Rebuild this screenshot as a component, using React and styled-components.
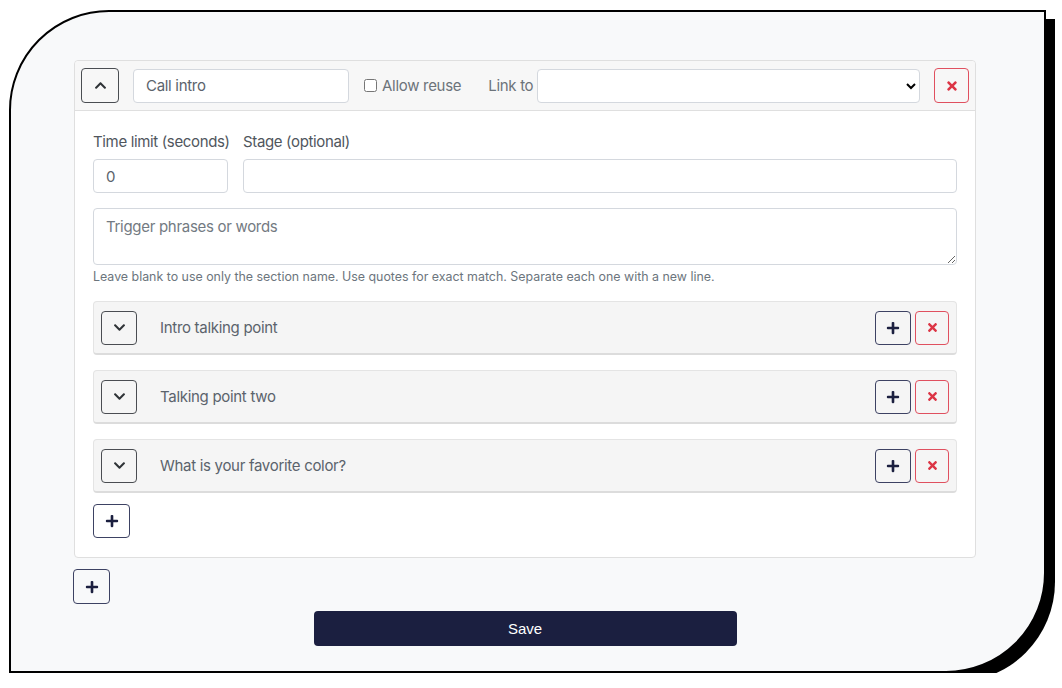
import React from 'react';
import styled, { createGlobalStyle } from 'styled-components';
import { FaChevronUp, FaChevronDown, FaPlus, FaTimes } from 'react-icons/fa';

const GlobalStyle = createGlobalStyle`
    body {
        margin: 0;
        background: #fff;
        font-family: Inter, 'Noto Sans', sans-serif;
    }
    * {
        box-sizing: border-box;
    }
`;

const points = ['Intro talking point', 'Talking point two', 'What is your favorite color?'];

export default function App() {
    return (
        <>
            <GlobalStyle />
            <Frame>
                <Column>
                    <Card>
                        <CardHeader>
                            <IconButton $variant="dark" $w={38}>
                                <FaChevronUp size={13} />
                            </IconButton>
                            <TextInput $w={216} defaultValue="Call intro" />
                            <CheckLabel>
                                <input type="checkbox" />
                                Allow reuse
                            </CheckLabel>
                            <LinkLabel>Link to</LinkLabel>
                            <Select>
                                <option></option>
                            </Select>
                            <IconButton $variant="danger" $w={35}>
                                <FaTimes size={14} />
                            </IconButton>
                        </CardHeader>
                        <CardBody>
                            <FieldRow>
                                <Field $w={135}>
                                    <Label>Time limit (seconds)</Label>
                                    <TextInput defaultValue="0" />
                                </Field>
                                <Field $grow>
                                    <Label>Stage (optional)</Label>
                                    <TextInput />
                                </Field>
                            </FieldRow>
                            <TextArea placeholder="Trigger phrases or words" />
                            <Help>
                                Leave blank to use only the section name. Use quotes for exact match. Separate each one with a new line.
                            </Help>
                            <PointList>
                                {points.map(p => (
                                    <PointRow key={p}>
                                        <IconButton $variant="dark" $w={36} $h={34}>
                                            <FaChevronDown size={13} />
                                        </IconButton>
                                        <PointTitle>{p}</PointTitle>
                                        <RowActions>
                                            <IconButton $variant="navy" $w={36} $h={34}>
                                                <FaPlus size={14} />
                                            </IconButton>
                                            <IconButton $variant="danger" $w={34} $h={34}>
                                                <FaTimes size={13} />
                                            </IconButton>
                                        </RowActions>
                                    </PointRow>
                                ))}
                            </PointList>
                            <IconButton $variant="navy" $w={37} $h={34}>
                                <FaPlus size={14} />
                            </IconButton>
                        </CardBody>
                    </Card>
                    <IconButton $variant="navy" $w={37} $h={35}>
                        <FaPlus size={14} />
                    </IconButton>
                    <SaveButton>Save</SaveButton>
                </Column>
            </Frame>
        </>
    );
}

const Frame = styled.div`
    margin: 10px 0 0 9px;
    width: 1037px;
    height: 663px;
    border: 2px solid #000;
    border-radius: 100px 0 100px 0;
    background: #f8f9fa;
    box-shadow: 9px 9px 0 #000;
    padding: 48px 0 0 62px;
`;

const Column = styled.div`
    width: 904px;
    display: flex;
    flex-direction: column;
    align-items: flex-start;
`;

const Card = styled.div`
    width: 902px;
    margin: 0 1px 11px;
    background: #fff;
    border: 1px solid #dfdfdf;
    border-radius: 4px;
`;

const CardHeader = styled.div`
    height: 50px;
    display: flex;
    align-items: center;
    padding: 0 6px;
    background: #f7f7f7;
    border-bottom: 1px solid #dfdfdf;
    border-radius: 4px 4px 0 0;
    white-space: nowrap;

    & > * {
        flex: none;
    }

    & > * + * {
        margin-left: 14px;
    }
`;

const IconButton = styled.button`
    width: ${p => p.$w}px;
    height: ${p => p.$h || 35}px;
    flex: none;
    display: flex;
    align-items: center;
    justify-content: center;
    padding: 0;
    background: transparent;
    border-radius: 4px;
    cursor: pointer;
    border: 1px solid
        ${p => (p.$variant === 'danger' ? '#e0505f' : p.$variant === 'navy' ? '#3d4263' : '#4a4d52')};
    color: ${p => (p.$variant === 'danger' ? '#dc3545' : p.$variant === 'navy' ? '#1b1f3f' : '#2f3337')};
`;

const TextInput = styled.input`
    width: ${p => (p.$w ? `${p.$w}px` : '100%')};
    height: 34px;
    flex: none;
    border: 1px solid #d4d8de;
    border-radius: 4px;
    background: #fff;
    padding: 0 12px;
    font-family: Inter, sans-serif;
    font-size: 15px;
    letter-spacing: -0.3px;
    color: #5b636c;
    outline: none;
`;

const CheckLabel = styled.label`
    display: flex;
    align-items: center;
    gap: 5px;
    font-size: 15px;
    letter-spacing: -0.3px;
    color: #6c737a;

    input {
        margin: 0;
        width: 13px;
        height: 13px;
    }

    && {
        margin-left: 15px;
    }
`;

const LinkLabel = styled.span`
    font-size: 15px;
    letter-spacing: -0.3px;
    color: #6c737a;

    && {
        margin-left: 27px;
    }
`;

const Select = styled.select`
    width: 383px;
    height: 34px;
    border: 1px solid #d4d8de;
    border-radius: 4px;
    background: #fff;
    font-family: Inter, sans-serif;

    && {
        margin-left: 4px;
    }
`;

const CardBody = styled.div`
    padding: 19px 18px 19px;
`;

const FieldRow = styled.div`
    display: flex;
    gap: 15px;
    margin-bottom: 15px;
`;

const Field = styled.div`
    display: flex;
    flex-direction: column;
    gap: 5px;
    ${p => (p.$grow ? 'flex: 1;' : `width: ${p.$w}px; flex: none;`)}
`;

const Label = styled.label`
    line-height: 24px;
    white-space: nowrap;
    font-size: 15px;
    letter-spacing: -0.35px;
    color: #50565d;
`;

const TextArea = styled.textarea`
    display: block;
    width: 100%;
    height: 57px;
    border: 1px solid #d4d8de;
    border-radius: 4px;
    padding: 8px 12px;
    font-family: Inter, sans-serif;
    font-size: 15px;
    letter-spacing: -0.3px;
    color: #5b636c;
    outline: none;

    &::placeholder {
        color: #737a82;
    }
`;

const Help = styled.div`
    margin-top: 4px;
    line-height: 16px;
    white-space: nowrap;
    font-size: 12.4px;
    color: #6c757d;
`;

const PointList = styled.div`
    display: flex;
    flex-direction: column;
    gap: 15px;
    margin: 16px 0 11px;
`;

const PointRow = styled.div`
    height: 54px;
    display: flex;
    align-items: center;
    padding: 0 7px;
    background: #f5f5f5;
    border: 1px solid #e4e4e4;
    border-bottom: 2px solid #dcdcdc;
    border-radius: 4px;
`;

const PointTitle = styled.span`
    margin-left: 23px;
    font-size: 15px;
    letter-spacing: -0.3px;
    color: #5b636c;
`;

const RowActions = styled.div`
    margin-left: auto;
    display: flex;
    gap: 4px;
`;

const SaveButton = styled.button`
    align-self: center;
    width: 423px;
    height: 35px;
    margin-top: 7px;
    border: none;
    border-radius: 4px;
    background: #1b1f40;
    color: #fff;
    font-family: 'Liberation Sans', Arial, sans-serif;
    font-size: 15px;
    cursor: pointer;
`;
